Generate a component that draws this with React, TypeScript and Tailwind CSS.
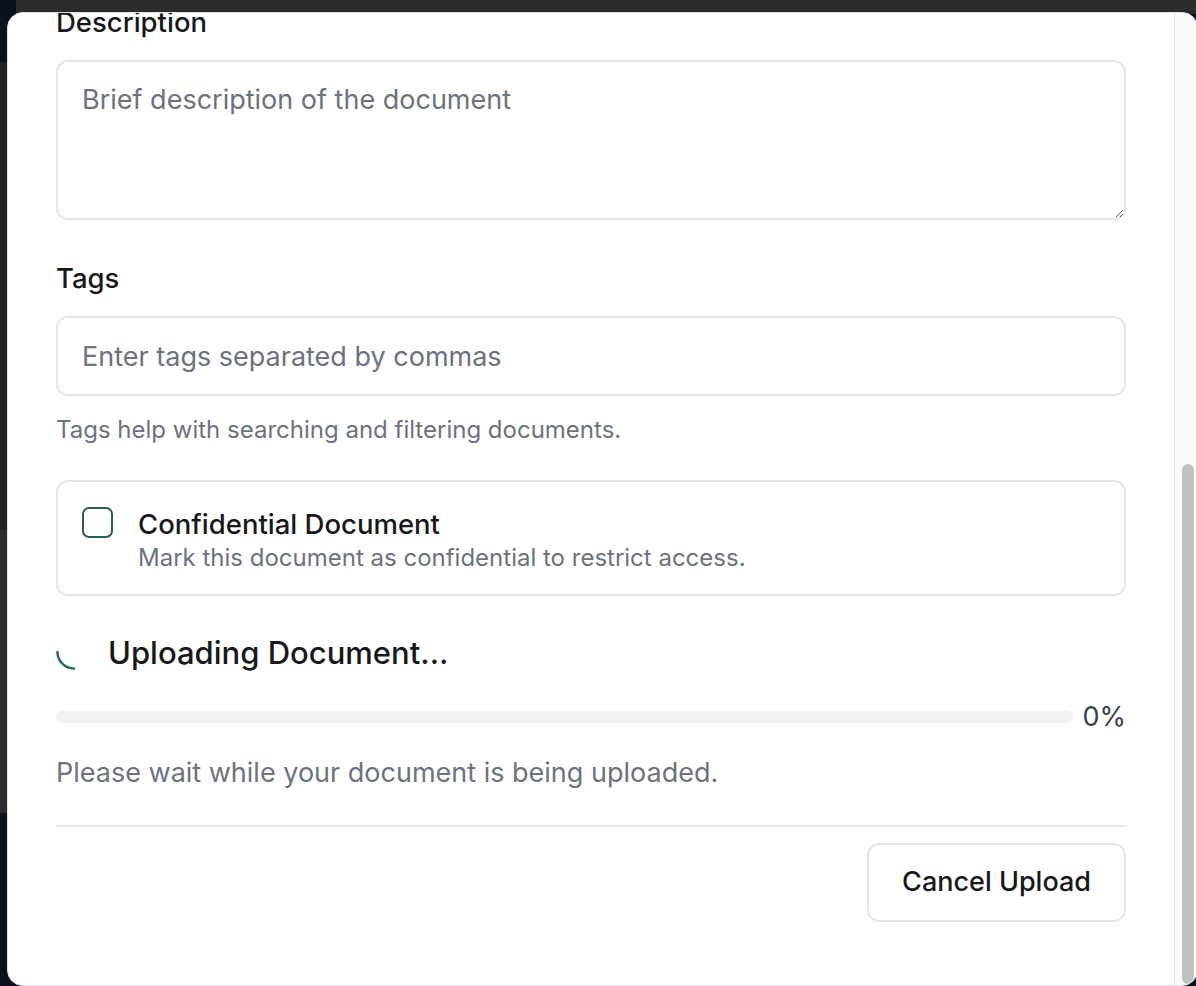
import React from "react";

export default function App() {
  return (
    <div
      className="relative w-[1196px] h-[986px] overflow-hidden bg-[#0b111b]"
      style={{ fontFamily: "Inter, 'Noto Sans', sans-serif" }}
    >
      {/* backdrop pieces */}
      <div className="absolute left-[16px] right-0 top-0 h-[14px] bg-[#2c2c2e]" />
      <div className="absolute left-0 top-[62px] w-[8px] h-[468px] bg-[#212121]" />
      <div className="absolute left-0 top-[530px] w-[8px] h-[283px] bg-[#2b2b2b]" />

      {/* modal */}
      <div className="absolute left-[7px] top-[12px] right-[-2px] bottom-0 flex overflow-hidden rounded-[16px] border border-[#dfe1e7] bg-white">
        <div className="flex-1 flex flex-col px-[48px]">
          <label className="-mt-[9px] block text-[27.5px] leading-[36px] font-medium text-[#18181b]">
            Description
          </label>
          <textarea
            className="mt-[20px] h-[160px] w-full rounded-[12px] border-2 border-[#e5e5ea] px-[24px] py-[20px] text-[27px] leading-[36px] text-[#18181b] outline-none placeholder:text-[#6b7280]"
            placeholder="Brief description of the document"
          />

          <label className="mt-[40px] block text-[27.5px] leading-[36px] font-medium text-[#18181b]">
            Tags
          </label>
          <input
            className="mt-[20px] h-[80px] w-full rounded-[12px] border-2 border-[#e5e5ea] px-[24px] text-[27px] text-[#18181b] outline-none placeholder:text-[#6b7280]"
            placeholder="Enter tags separated by commas"
          />
          <p className="mt-[18px] text-[24px] leading-[32px] text-[#6b7280]">
            Tags help with searching and filtering documents.
          </p>

          <div className="mt-[34px] flex items-start gap-[25px] rounded-[12px] border-2 border-[#e5e5ea] px-[24px] pt-[24px] pb-[20px]">
            <div className="mt-[1px] h-[31px] w-[31px] shrink-0 rounded-[7px] border-2 border-[#2b5c58]" />
            <div className="flex flex-col">
              <span className="text-[27.5px] leading-[36px] font-medium text-[#18181b]">
                Confidential Document
              </span>
              <span className="text-[24px] leading-[32px] text-[#6b7280]">
                Mark this document as confidential to restrict access.
              </span>
            </div>
          </div>

          <div className="mt-[37px] flex items-center gap-[16px]">
            <svg width="36" height="36" viewBox="0 0 36 36" className="-mt-[2px] shrink-0">
              <path
                d="M1.5 18 A16.5 16.5 0 0 0 18 34.5"
                fill="none"
                stroke="#2e6b66"
                strokeWidth="2.5"
                strokeLinecap="round"
              />
            </svg>
            <span className="text-[31px] leading-[40px] font-medium text-[#18181b]">
              Uploading Document...
            </span>
          </div>

          <div className="mt-[26px] flex items-center gap-[9px]">
            <div className="h-[12px] flex-1 rounded-full bg-[#f2f2f3]" />
            <span className="text-[27px] leading-[36px] text-[#374151]">0%</span>
          </div>

          <p className="mt-[20px] text-[27px] leading-[36px] text-[#6b7280]">
            Please wait while your document is being uploaded.
          </p>

          <div className="mt-[34px] h-[2px] w-full bg-[#e5e5ea]" />

          <div className="mt-[16px] flex justify-end">
            <button className="h-[79px] rounded-[12px] border-2 border-[#e5e5ea] bg-white px-[33px] text-[27px] font-medium text-[#18181b]">
              Cancel Upload
            </button>
          </div>
        </div>

        {/* scrollbar */}
        <div className="w-[23px] shrink-0 border-l border-[#e8e8e8] bg-[#fafafa]">
          <div className="ml-[7px] mt-[451px] h-[520px] w-[12px] rounded-full bg-[#c1c1c1]" />
        </div>
      </div>
    </div>
  );
}
